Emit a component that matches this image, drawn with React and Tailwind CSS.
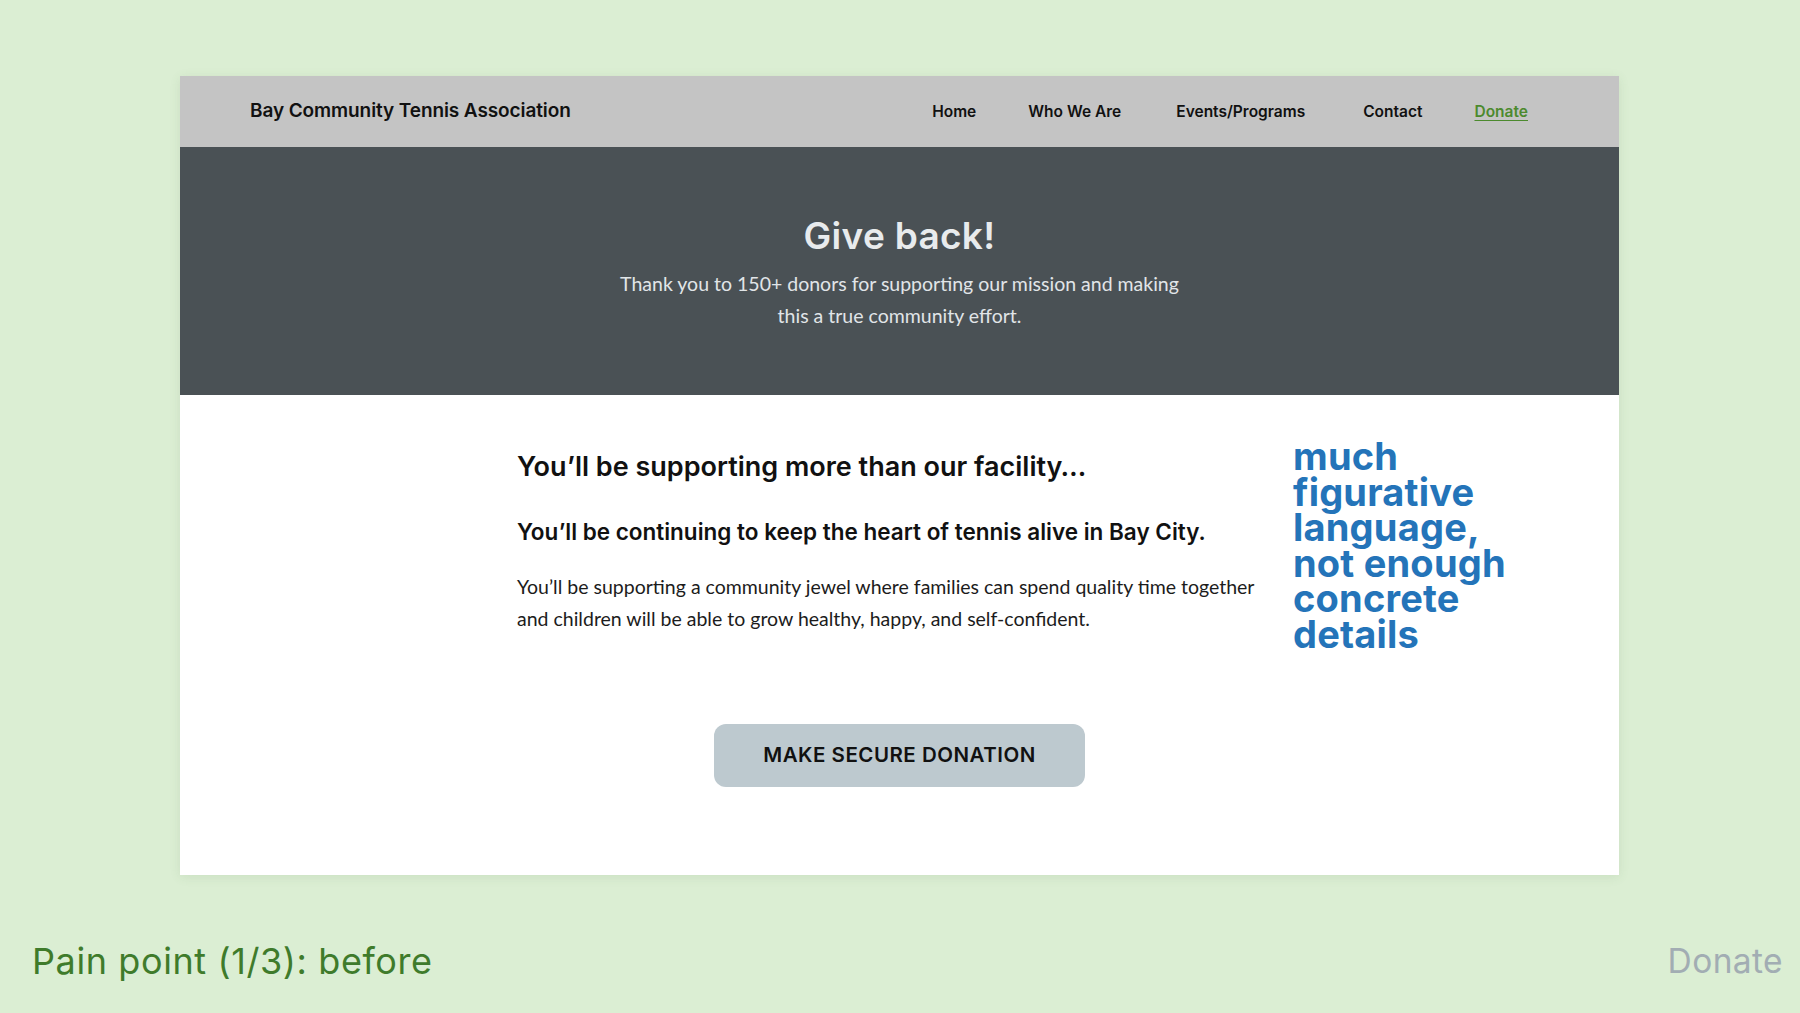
const heading = "font-['Inter',sans-serif]"
const body = "font-['Lato',sans-serif]"

export default function App() {
  return (
    <div className="flex min-h-[1013px] w-full flex-col bg-[#dbeed3]">
      <div className="flex-1 pl-[180px] pr-[181px] pt-[76px]">
        <div className="flex h-[799px] flex-col bg-white shadow-[0_2px_10px_rgba(80,120,70,0.12)]">
          <header className="flex h-[71px] shrink-0 items-center bg-[#c4c4c4] pl-[70px] pr-[91px]">
            <span className={`${heading} text-[19px] font-semibold tracking-[-0.1px] text-[#111]`}>
              Bay Community Tennis Association
            </span>
            <nav className={`${heading} ml-auto flex items-center text-[15.5px] font-semibold text-[#111]`}>
              <a className="whitespace-nowrap">Home</a>
              <a className="ml-[52px] whitespace-nowrap">Who We Are</a>
              <a className="ml-[55px] whitespace-nowrap">Events/Programs</a>
              <a className="ml-[58px] whitespace-nowrap">Contact</a>
              <a className="ml-[52px] text-[#4c8a2e] underline underline-offset-[3px]">Donate</a>
            </nav>
          </header>

          <section className="flex h-[248px] shrink-0 flex-col items-center bg-[#4a5155] pt-[67px]">
            <h1 className={`${heading} text-[37px] font-semibold leading-[44px] tracking-[0.3px] text-[#e8ebed]`}>
              Give back!
            </h1>
            <p className={`${body} mt-[10px] max-w-[575px] text-center text-[19.5px] leading-[32px] text-[#e1e5e8]`}>
              Thank you to 150+ donors for supporting our mission and making this a true community effort.
            </p>
          </section>

          <section className="flex flex-1 flex-col">
            <div className="flex pl-[337px] pt-[56px]">
              <div className="w-[776px]">
                <h2 className={`${heading} text-[27px] font-semibold leading-[32px] text-[#111]`}>
                  You’ll be supporting more than our facility…
                </h2>
                <h3 className={`${heading} mt-[34px] text-[22.5px] font-semibold leading-[30px] text-[#111]`}>
                  You’ll be continuing to keep the heart of tennis alive in Bay City.
                </h3>
                <p className={`${body} mt-[24px] w-[752px] text-[19.5px] leading-[32px] text-[#1c1c1c]`}>
                  You’ll be supporting a community jewel where families can spend quality time together and children
                  will be able to grow healthy, happy, and self-confident.
                </p>
              </div>
              <p className={`${heading} -mt-[12px] w-[240px] text-[38px] font-bold leading-[35.5px] tracking-[0.2px] text-[#2474b9]`}>
                much figurative language, not enough concrete details
              </p>
            </div>
            <div className="mt-[72px] flex justify-center">
              <button className={`${heading} flex h-[63px] w-[371px] items-center justify-center rounded-[12px] bg-[#bdc9cf] text-[20.5px] font-semibold tracking-[0.5px] text-[#111]`}>
                MAKE SECURE DONATION
              </button>
            </div>
          </section>
        </div>
      </div>
      <footer className={`${heading} flex items-center justify-between pb-[30px] pl-[32px] pr-[17px] pt-[36px]`}>
        <span className="text-[36px] leading-[44px] tracking-[0.6px] text-[#3f7b2b]">Pain point (1/3): before</span>
        <span className="text-[33.5px] leading-[44px] tracking-[0.4px] text-[#a2adb3]">Donate</span>
      </footer>
    </div>
  )
}
